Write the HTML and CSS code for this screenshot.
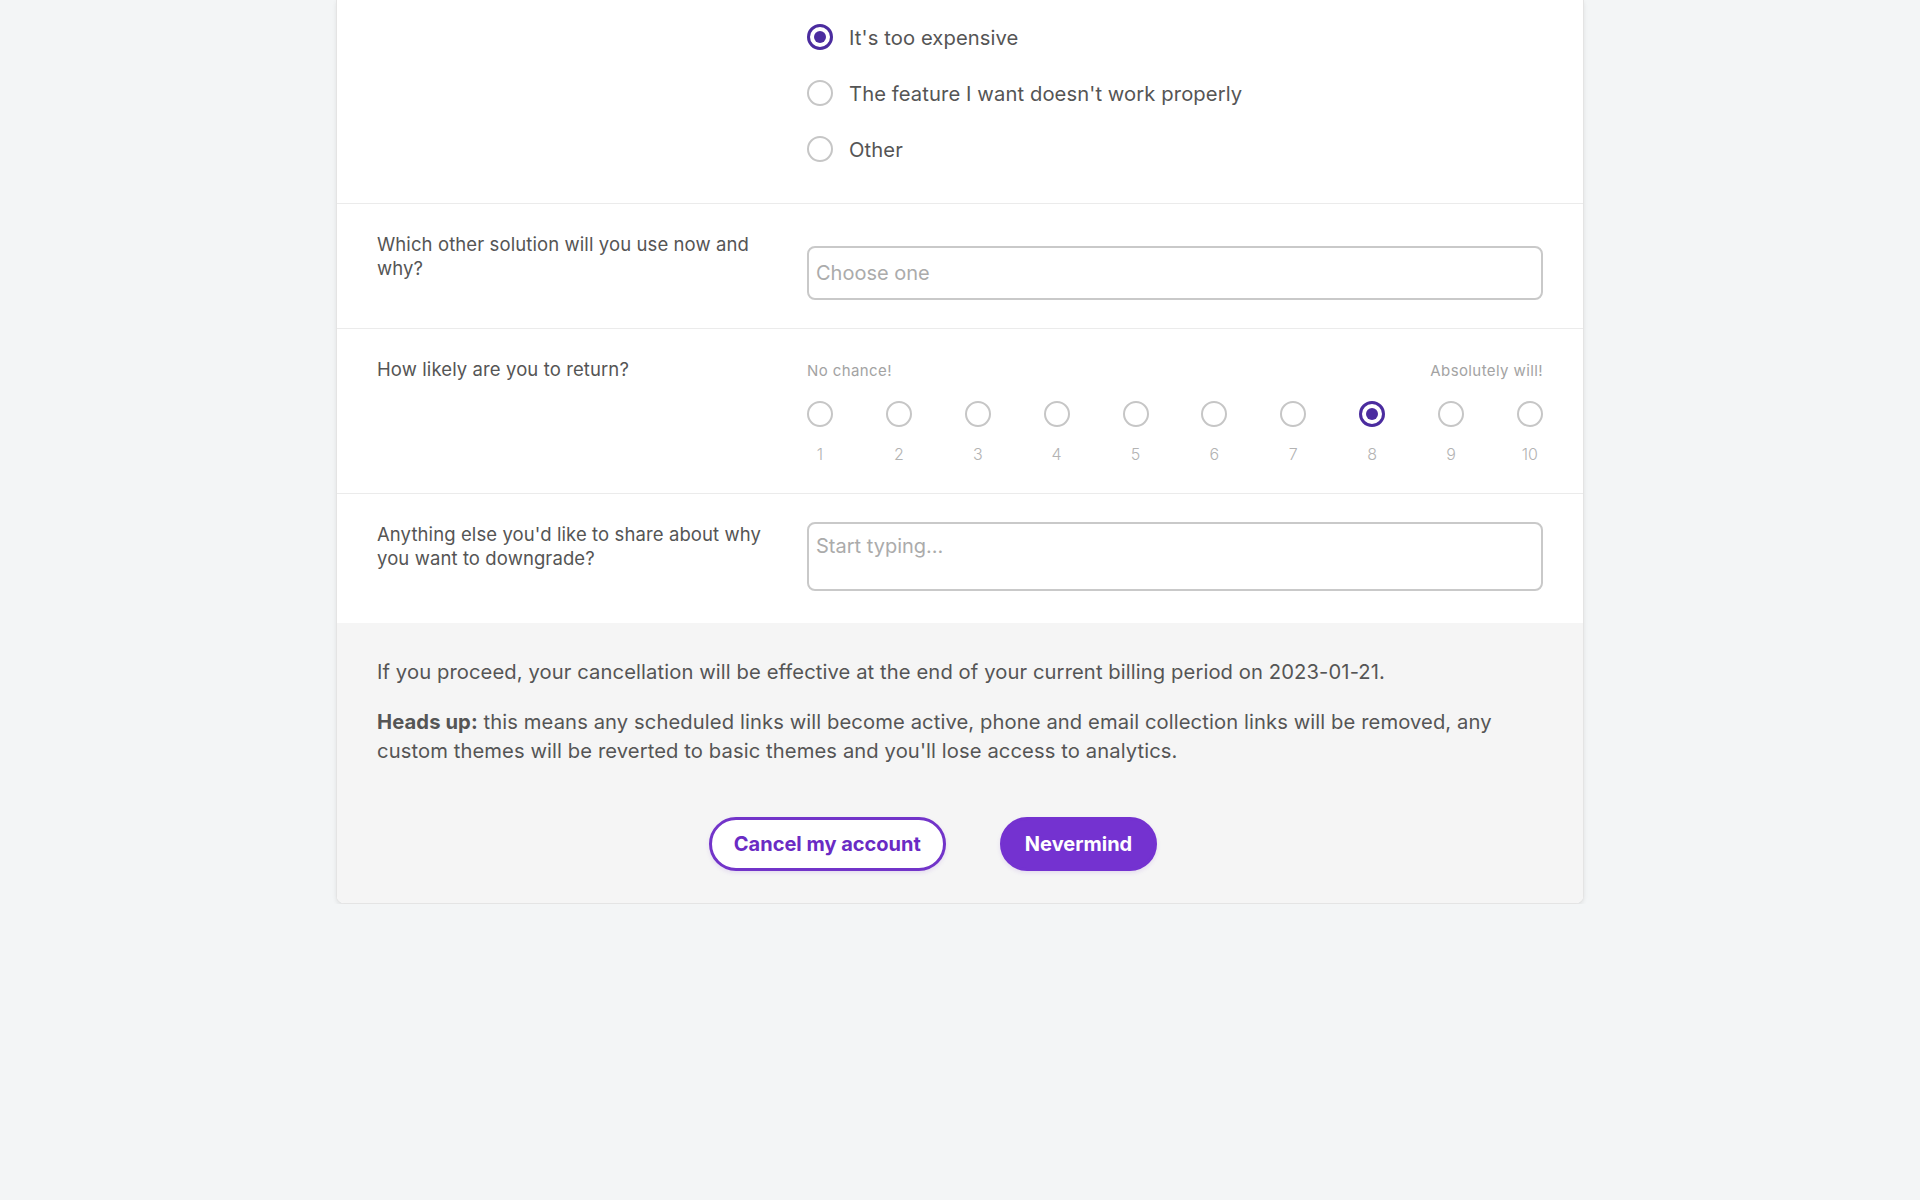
FILE: index.html
```html
<!DOCTYPE html>
<html>
<head>
  <title>Cancel subscription</title>
  <link rel="stylesheet" href="styles.css">
</head>
<body>

<div class="card">
  <!-- reasons -->
  <div class="row row-top">
    <div class="label"></div>
    <div class="choices">
      <label class="choice"><input type="radio" name="reason" checked> It's too expensive</label>
      <label class="choice"><input type="radio" name="reason"> The feature I want doesn't work properly</label>
      <label class="choice"><input type="radio" name="reason"> Other</label>
    </div>
  </div>

  <div class="row">
    <div class="label">Which other solution will you use now and why?</div>
    <div><input class="field field-select" type="text" placeholder="Choose one"></div>
  </div>

  <div class="row row-scale">
    <div class="label">How likely are you to return?</div>
    <div>
      <div class="scale-ends">
        <span>No chance!</span>
        <span>Absolutely will!</span>
      </div>
      <div class="scale">
        <label class="step"><input type="radio" name="return"><span>1</span></label>
        <label class="step"><input type="radio" name="return"><span>2</span></label>
        <label class="step"><input type="radio" name="return"><span>3</span></label>
        <label class="step"><input type="radio" name="return"><span>4</span></label>
        <label class="step"><input type="radio" name="return"><span>5</span></label>
        <label class="step"><input type="radio" name="return"><span>6</span></label>
        <label class="step"><input type="radio" name="return"><span>7</span></label>
        <label class="step"><input type="radio" name="return" checked><span>8</span></label>
        <label class="step"><input type="radio" name="return"><span>9</span></label>
        <label class="step"><input type="radio" name="return"><span>10</span></label>
      </div>
    </div>
  </div>

  <div class="row row-last">
    <div class="label">Anything else you'd like to share about why you want to downgrade?</div>
    <div><textarea class="field field-area" placeholder="Start typing..."></textarea></div>
  </div>

  <div class="footer">
    <p>If you proceed, your cancellation will be effective at the end of your current billing period on 2023-01-21.</p>
    <p><b>Heads up:</b> this means any scheduled links will become active, phone and email collection links will be removed, any custom themes will be reverted to basic themes and you'll lose access to analytics.</p>
    <div class="actions">
      <button class="btn btn-outline">Cancel my account</button>
      <button class="btn btn-solid">Nevermind</button>
    </div>
  </div>
</div>

</body>
</html>
```

FILE: styles.css
```css
body {
  margin: 0;
  background-color: #f3f5f6;
  font-family: Inter, "Noto Sans", sans-serif;
  color: #555;
}
.card {
  width: 1246px;
  margin: 0 auto;
  background: #fff;
  border: 1px solid #e4e4e4;
  border-top: none;
  border-radius: 0 0 8px 8px;
  box-shadow: 0 2px 4px rgba(0, 0, 0, 0.08);
  overflow: hidden;
}
.row {
  display: grid;
  grid-template-columns: 400px 1fr;
  column-gap: 30px;
  padding: 28px 40px 28px 40px;
  border-bottom: 1px solid #ebebeb;
}
.row-top {
  padding-top: 9px;
  padding-bottom: 26px;
}
.row-scale {
  padding-bottom: 31px;
}
.row-last {
  border-bottom: none;
  padding-bottom: 32px;
}
.label {
  font-size: 18.5px;
  line-height: 24px;
  letter-spacing: 0.1px;
  color: #555;
}

/* radios */
input[type="radio"] {
  appearance: none;
  -webkit-appearance: none;
  width: 26px;
  height: 26px;
  margin: 0;
  border: 2px solid #c6c6c6;
  border-radius: 50%;
  background: #fff;
  flex-shrink: 0;
  box-sizing: border-box;
  display: grid;
  place-items: center;
}
input[type="radio"]:checked {
  border: 3px solid #4b2c9f;
}
input[type="radio"]:checked::after {
  content: "";
  width: 12px;
  height: 12px;
  border-radius: 50%;
  background: #4b2c9f;
}
.choices {
  display: flex;
  flex-direction: column;
}
.choice {
  display: flex;
  align-items: center;
  gap: 16px;
  height: 56px;
  font-size: 20.2px;
  letter-spacing: 0.1px;
  color: #555;
}

/* text fields */
.field {
  display: block;
  width: 100%;
  box-sizing: border-box;
  border: 2px solid #c9c9c9;
  border-radius: 8px;
  font-family: inherit;
  font-size: 20px;
  color: #555;
  padding: 0 7px;
  background: #fff;
}
.field::placeholder {
  color: #ababab;
}
.field-select {
  height: 54px;
  margin-top: 14px;
}
.field-area {
  height: 69px;
  padding-top: 10px;
  resize: none;
}

/* scale */
.scale-ends {
  display: flex;
  justify-content: space-between;
  font-size: 15px;
  letter-spacing: 0.4px;
  line-height: 18px;
  color: #a3a3a3;
  padding-top: 5px;
}
.scale {
  display: flex;
  justify-content: space-between;
  margin-top: 21px;
}
.step {
  display: flex;
  flex-direction: column;
  align-items: center;
  width: 26px;
  gap: 19px;
  font-size: 16px;
  font-weight: 300;
  line-height: 16px;
  color: #b3b3b3;
}

/* footer */
.footer {
  background: #f5f5f5;
  padding: 34px 40px 32px;
  font-size: 20.2px;
  letter-spacing: 0.1px;
  line-height: 29px;
}
.footer p {
  margin: 0 0 21px;
}
.footer b {
  font-weight: 700;
}
.actions {
  display: flex;
  justify-content: center;
  gap: 54px;
  padding-right: 54px;
  margin-top: 52px;
}
.btn {
  height: 54px;
  padding: 0 22px;
  border-radius: 27px;
  font-family: inherit;
  font-size: 20px;
  font-weight: 700;
  cursor: pointer;
  box-shadow: 0 2px 4px rgba(116, 49, 208, 0.12);
}
.btn-outline {
  background: #fff;
  color: #6a2bc4;
  border: 3px solid #7234c9;
}
.btn-solid {
  background: #7432d0;
  color: #fff;
  border: 3px solid #7432d0;
}
```
